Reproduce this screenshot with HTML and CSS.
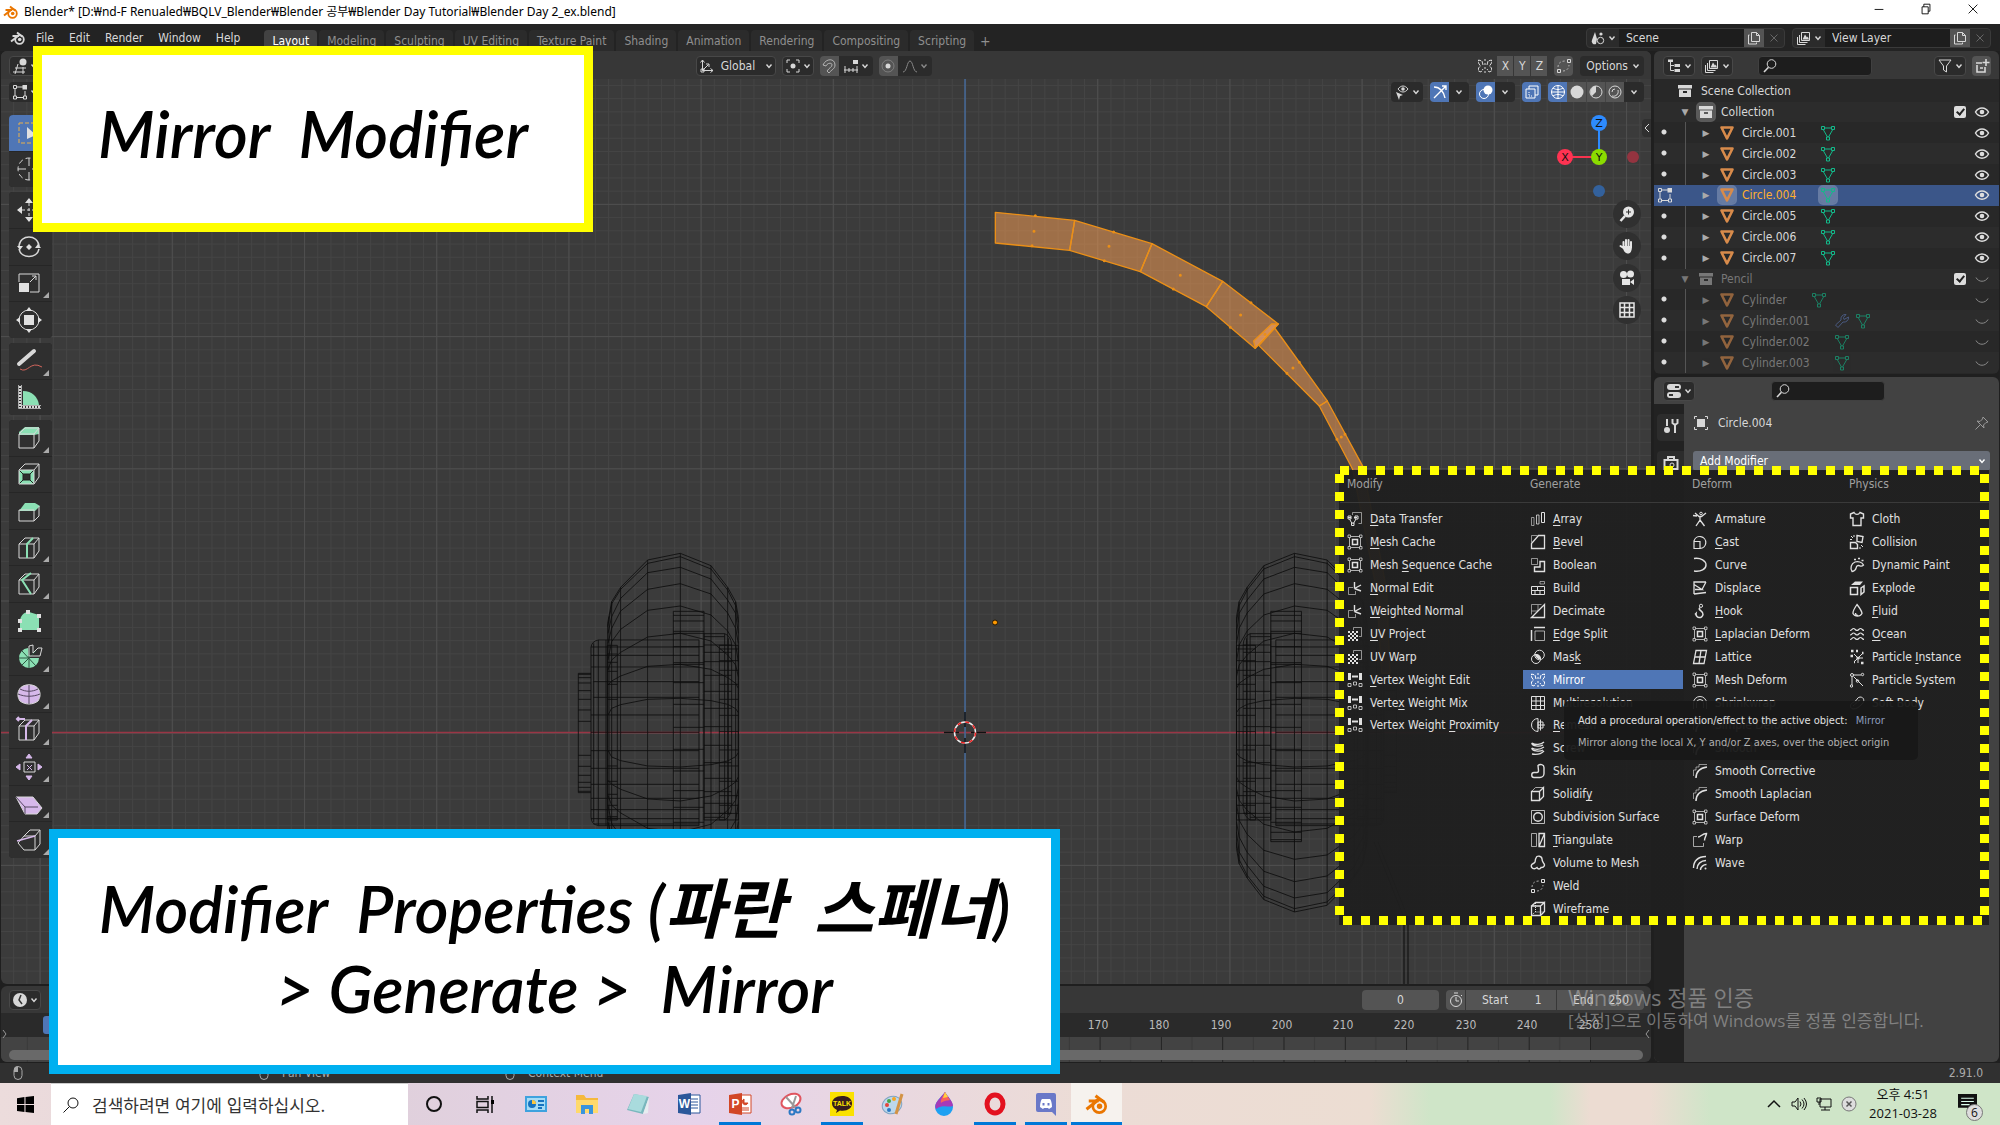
FILE: index.html
```html
<!DOCTYPE html>
<html lang="ko">
<head>
<meta charset="utf-8">
<title>Blender Day 2 - Mirror Modifier</title>
<link rel="stylesheet" href="styles.css">
</head>
<body>
<svg class="sprite" aria-hidden="true">
  <symbol id="blender" viewBox="0 0 16 16"><path d="M1 11.5 8 6H2.500M4.500 6H9M7 2.500l5.500 4.200" stroke-width="2"/><circle cx="9.500" cy="9.500" r="4.300" stroke-width="1.800"/><circle class="pupil" cx="9.700" cy="9.500" r="1.800" stroke="none"/></symbol>
  <symbol id="down" viewBox="0 0 8 8"><path d="M1.500 2.500 4 5.500l2.500-3" stroke-width="1.400"/></symbol>
  <symbol id="search" viewBox="0 0 16 16"><circle cx="9.500" cy="6" r="4.300"/><path d="M6.500 9.200 2 14" stroke-width="1.600"/></symbol>
  <symbol id="copy" viewBox="0 0 16 16"><path d="M5.500 2.500h5l3 3v6h-8zM10.500 2.500v3h3M3.500 5H2.500v9h8v-1.500"/></symbol>
  <symbol id="close" viewBox="0 0 16 16"><path d="m4.500 4.500 7 7m0-7-7 7"/></symbol>
  <symbol id="scene" viewBox="0 0 16 16"><path d="M5 2 2 10a3 3 0 0 0 4 4l1-5z" class="solid"/><circle cx="10.500" cy="10.500" r="3.200"/><circle cx="11" cy="4" r="1.600" class="solid"/></symbol>
  <symbol id="layer" viewBox="0 0 16 16"><path d="M5.500 2.500h8v8h-8zM3.500 5v7.500h8M1.500 7v7.500h8"/><path class="solid" d="m6.500 9.500 2.500-5 2 3 .8-1 1.200 3z"/></symbol>
  <symbol id="tree" viewBox="0 0 16 16"><path d="M4.500 4v8.500H8M4.500 7.500H8" /><path class="solid" d="M2 1.500h5v2.500H2zM8.500 6h5.500v3H8.500zM8.500 11h5.500v3H8.500z"/></symbol>
  <symbol id="funnel" viewBox="0 0 16 16"><path d="M2 2h12L9.500 8v6l-3-2V8z"/></symbol>
  <symbol id="box" viewBox="0 0 16 16"><path class="solid" fill-rule="evenodd" d="M1 2h14v3.500H1zM2 6.500h12V14H2zm4 1.500v2h4V8z"/></symbol>
  <symbol id="newbox" viewBox="0 0 16 16"><path d="M2 5h6M3 7v7h8V9M6 10h3M12 1v7M8.500 4.500h7" stroke-width="1.600"/></symbol>
  <symbol id="eye" viewBox="0 0 16 16"><path d="M1.500 8c3-5.500 10-5.500 13 0-3 5.500-10 5.500-13 0z" stroke-width="1.500"/><circle cx="8" cy="8" r="2.300" class="solid"/></symbol>
  <symbol id="shut" viewBox="0 0 16 16"><path d="M2 6.500c2.500 5 9.500 5 12 0"/></symbol>
  <symbol id="tri" viewBox="0 0 16 16"><path d="M2.500 2.500h11L8 13.500z" stroke-width="2.600" stroke-linejoin="round"/></symbol>
  <symbol id="mesh" viewBox="0 0 16 16"><path d="M4 3h8M3.200 4.500 7.500 12M12.800 4.500 8.500 12M1.500 1.500h3v3h-3zM11.500 1.500h3v3h-3zM6.500 12h3v3h-3z"/></symbol>
  <symbol id="edit" viewBox="0 0 16 16"><path d="M4 3h7M3 5v7M5 13.500h6M13 7v5M1.500 1.500h3v3h-3zM1.500 12h3v3h-3zM11.500 12h3v3h-3z"/><path class="solid" d="M10.500 1H15v4.500h-4.500z"/></symbol>
  <symbol id="wrench" viewBox="0 0 16 16"><path d="M10 6.500 14.500 4A4.500 4.500 0 0 1 9 9l-5 5.500L1.500 12 7 7a4.500 4.500 0 0 1 5-5.500L9.500 4.500z"/></symbol>
  <symbol id="mirror" viewBox="0 0 16 16"><path d="M8 1v2m0 2v2m0 2v2m0 2v2"/><path d="M6 7 5 3 1.500 2v3l2 3-2 2v3L4 14l2-3M10 7l1-4 3.500-1v3l-2 3 2 2v3L12 14l-2-3" stroke-dasharray="4 1"/></symbol>
  <symbol id="i-data" viewBox="0 0 16 16"><path d="M5.500 4V1.500h9v11h-3" opacity=".6"/><path d="M1 6.500h3m3 0h3M2.500 8 5 12.500M9 8 6.500 12.500M1 5h3v3H1zM8 5h3v3H8zM4.500 12h2.500v2.500H4.500z"/></symbol>
  <symbol id="i-cache" viewBox="0 0 16 16"><path d="M2.500 4v8.500M13.500 4v8.500M4 2.500h8.500M4 13.500h8.500M1 1h2.500v2.500H1zM12.500 1H15v2.500h-2.500zM1 12.500h2.500V15H1zM12.500 12.500H15V15h-2.500z" opacity=".75"/><path d="M5.500 5.500h5v5h-5z" stroke-width="1.500"/></symbol>
  <symbol id="i-normal" viewBox="0 0 16 16"><path d="M6 7.500H1.500v7h7V11" opacity=".6"/><path d="M7.500 8.500V2M7.500 8.500 14 5M7.500 8.500l6.500 2.500" stroke-width="1.400"/></symbol>
  <symbol id="i-uv" viewBox="0 0 16 16"><path d="M6.500 4V1.500h8v9H12" opacity=".6"/><path stroke-width="2" stroke-dasharray="2 2" d="M1 6h10M3 8h8M1 10h10M3 12h8M1 14h10"/></symbol>
  <symbol id="i-weight" viewBox="0 0 16 16"><path stroke-width="3" d="M2.500 1v7M13.500 1v7"/><path stroke-width="2" d="M5 4.500h6"/><path d="M1 11.500h3v3H1zM6.500 10h3v3h-3zM12 11.500h3v3h-3z" opacity=".8"/></symbol>
  <symbol id="i-array" viewBox="0 0 16 16"><path d="M1.500 6.500H4v8H1.500z" opacity=".6"/><path d="M6.500 4H9v9H6.500z" opacity=".8"/><path d="M11.500 1.500H14.500v10h-3z"/></symbol>
  <symbol id="i-bevel" viewBox="0 0 16 16"><path d="M1.500 1.500h6M1.500 1.500v7" opacity=".6"/><path d="M1.500 14.500v-5l7-8h6v13z" stroke-width="1.300"/></symbol>
  <symbol id="i-bool" viewBox="0 0 16 16"><path d="M1.500 1.500h6v6h-6z" opacity=".6"/><path d="M10 4.500h4.500v10h-10V10H10z" stroke-width="1.400"/></symbol>
  <symbol id="i-build" viewBox="0 0 16 16"><path d="M1.500 6.500h6v4h-6zM1.500 10.500h13v4h-13zM5 14.500v-4M10 14.500v-4M7.500 6.500h7v4"/><path d="M10 1.500h4.500V4H10z" opacity=".6"/></symbol>
  <symbol id="i-decimate" viewBox="0 0 16 16"><path d="M1.500 1.500v10M1.500 1.500h10M1.500 8H8V2" opacity=".6"/><path d="m1.500 14.500 13-13v13z" stroke-width="1.300"/></symbol>
  <symbol id="i-split" viewBox="0 0 16 16"><path d="M4 1.500h11M1.500 4v11" stroke-width="1.500"/><path d="M5 5h9.500v9.500H5z" opacity=".7"/></symbol>
  <symbol id="i-mask" viewBox="0 0 16 16"><circle cx="6" cy="10" r="4.500"/><circle cx="9.500" cy="6" r="4.800"/><path class="solid" d="M5 5a5 5 0 0 1 6 5 5 5 0 0 1-6-5z"/></symbol>
  <symbol id="i-multi" viewBox="0 0 16 16"><path d="M1.500 1.500h13v13h-13zM1.500 6h13M1.500 10.500h13M6 1.500v13M10.500 1.500v13"/></symbol>
  <symbol id="i-remesh" viewBox="0 0 16 16"><path d="M8 1.500a6.500 6.500 0 0 0 0 13z"/><path d="M8 5h5v6H8zM8 8h7M10.500 2.500v11"/></symbol>
  <symbol id="i-screw" viewBox="0 0 16 16"><path d="M2 3c3 2 9 2 12-1M2 3c-1 3 8 4 11 2M2 8c4 2 9 1 12-1M2 8c-1 3 8 4 11 2M2 14c5 1 9 0 12-3" stroke-width="1.300"/></symbol>
  <symbol id="i-skin" viewBox="0 0 16 16"><path d="M8 2.500c2-2 6-1 6 2v6a4 4 0 0 1-4 4H4c-3 0-3-5 0-5h3c1 0 1.500-.5 1.500-2z" stroke-width="1.400"/></symbol>
  <symbol id="i-solid" viewBox="0 0 16 16"><path d="M1.500 5.500h8v9h-8zM9.500 5.500l4-4v9l-4 4" stroke-width="1.300"/><path d="m1.500 5.500 4-4h8" opacity=".7"/></symbol>
  <symbol id="i-subd" viewBox="0 0 16 16"><path d="M1.500 1.500h13v13h-13z" opacity=".8"/><circle cx="8" cy="8" r="4.300" stroke-width="1.400"/></symbol>
  <symbol id="i-triang" viewBox="0 0 16 16"><path d="M1.500 1.500h5v13h-5z" opacity=".7"/><path d="M9 1.500h5.500v13H9zM9 14.500l5.500-13" stroke-width="1.300"/></symbol>
  <symbol id="i-volume" viewBox="0 0 16 16"><path d="M6 3c1-3 6-2 6 1 0 2 0 2 1.500 4 2 2 .5 5-2.500 4.500-1 2-3 2-4 0C4 15 .5 13 1.500 10c.500-1.500 3-1.500 3.500-3 .500-1.500 0-2 1-4z" stroke-width="1.400"/></symbol>
  <symbol id="i-weld" viewBox="0 0 16 16"><path d="M11.500 1.500h3v3h-3zM1.500 11.500h3v3h-3z"/><path d="M2 9c0-4 3-6 7-6M7 13c4 0 6-3 6-6" stroke-dasharray="2 2" opacity=".7"/></symbol>
  <symbol id="i-wire" viewBox="0 0 16 16"><path d="M1.500 5h9v9.500h-9zM10.500 5l4-3.500v9l-4 4M1.500 5l4-3.500h9" stroke-width="1.300"/><path d="M5.500 2v9h8M5.500 11l-4 3" stroke-dasharray="1 1"/></symbol>
  <symbol id="i-arm" viewBox="0 0 16 16"><path d="m3 2 4 3.500h2.500L14 2M8 5.500V9l-4 6M8 9l4.500 6M1 4.500l4 .5" stroke-width="1.300"/><circle cx="9" cy="2.500" r="1.300"/></symbol>
  <symbol id="i-cast" viewBox="0 0 16 16"><path d="M2 7a6 6 0 1 1 6 7.500H2zM2 7.500h6v7" stroke-width="1.200"/></symbol>
  <symbol id="i-curve" viewBox="0 0 16 16"><path d="M2 1.500C9 .5 14 4 14 8s-5 7-12 6" stroke-width="1.400"/></symbol>
  <symbol id="i-disp" viewBox="0 0 16 16"><path d="M14 2H2v12M2 4.500l8 5H3M2 14l12-1.500M10 9.500 14 2" stroke-width="1.300"/></symbol>
  <symbol id="i-hook" viewBox="0 0 16 16"><path d="M8 4.500c-3 3 4 3.500 3 7a3.500 3.500 0 0 1-7-1l-1 1" stroke-width="1.600"/><circle cx="9" cy="2.800" r="1.600"/></symbol>
  <symbol id="i-lattice" viewBox="0 0 16 16"><path d="M4 1.500h10.500l-2.500 13H1.500zM9 1.500l-2 13M3 8h10.500" stroke-width="1.300"/></symbol>
  <symbol id="i-shrink" viewBox="0 0 16 16"><path d="M1.500 14V8a6.500 6.500 0 0 1 13 0v6M4.500 13V8a3.500 3.500 0 0 1 7 0v5"/></symbol>
  <symbol id="i-smooth" viewBox="0 0 16 16"><path d="M4 15C4 8 8 5 15 4" stroke-width="1.500"/><path d="M1.500 13V7H4V4h3V1.500h8" opacity=".6"/></symbol>
  <symbol id="i-warp" viewBox="0 0 16 16"><path d="M5 4.500H1.500v10h10V11" opacity=".7"/><path d="M6 5c3 0 4-3.500 8.500-3.500 0 2-2 4-2 7" stroke-width="1.500"/></symbol>
  <symbol id="i-wave" viewBox="0 0 16 16"><path d="M1.500 13C1.500 6 6 1.500 14 1.500M5 14c0-5 4-8.500 9-8.500M8.500 15c0-3 3-5.500 6-5.500" stroke-width="1.400"/><circle cx="13.500" cy="13.500" r="1" class="solid"/></symbol>
  <symbol id="i-cloth" viewBox="0 0 16 16"><path d="M5 1.500c1.500 2.500 4.500 2.500 6 0l3.500 1.500v4H12v7.500H4V7H1.500V3z" stroke-width="1.400"/></symbol>
  <symbol id="i-coll" viewBox="0 0 16 16"><path d="m8 1.500 6 1-1 6-5-1zM1.500 8.500h5l2 2v4h-7z" stroke-width="1.400"/><path d="m2 2 2 2M5 1v2M1 5.500h2M12 11l2 2M11 13v2" /></symbol>
  <symbol id="i-paint" viewBox="0 0 16 16"><path d="M3 14.500c-2-3-1-8 3-9.500 3-1 7 0 8.500 3-3 3-4-1-6.500 1-1.500 1.500 0 5-5 5.500z" stroke-width="1.300"/><path d="M5 2.500h2M9 1.500h2M12.500 3.500h2" stroke-width="1.600"/></symbol>
  <symbol id="i-explode" viewBox="0 0 16 16"><path class="solid" d="m2 5 4-3.500h8L11 5z"/><path d="M1.500 7.500h7v7h-7zM12 8l3-2v6l-3 2.500z" stroke-width="1.500"/></symbol>
  <symbol id="i-fluid" viewBox="0 0 16 16"><path d="M8 1.500c5 6.500 5 8 5 9a5 4.500 0 0 1-9 0c0-1-.5-2.500 4-9zM6.500 10c0 1.500 1 2.500 2.500 2.500" stroke-width="1.300"/></symbol>
  <symbol id="i-ocean" viewBox="0 0 16 16"><path d="M1 4.500c2 0 2-2 3.500-2s2 2 3.500 2 2-2 3.500-2 2 2 3.500 2M1 9c2 0 2-2 3.500-2s2 2 3.500 2 2-2 3.500-2 2 2 3.500 2M1 13.500c2 0 2-2 3.500-2s2 2 3.500 2 2-2 3.500-2 2 2 3.500 2" stroke-width="1.200"/></symbol>
  <symbol id="i-pinst" viewBox="0 0 16 16"><path d="M9 9 5 5M9 9h5M9 9v5M9 9l4-4M9 9l-4 4" /><path stroke-width="2.500" d="M2 2h2.500M1.500 7H4M7.500 9h3M12 14h2.500M7 2h2M5 13h1M13 4h1.500"/></symbol>
  <symbol id="i-psys" viewBox="0 0 16 16"><path d="M4.500 4.500 14 14M4 3h8M3 5v8"/><circle cx="3" cy="3" r="1.500"/><circle cx="13.500" cy="2.500" r="1.200"/><circle cx="2.500" cy="14" r="1.200"/><circle cx="8.500" cy="9" r="1.300"/></symbol>
  <symbol id="i-soft" viewBox="0 0 16 16"><path d="M4 14C0 13 1 8 5 7c3-1 3-5 6-5 4 0 5 4 2 7s-5 5-9 5z"/><path d="m4 11 7-6" stroke-dasharray="2 1"/></symbol>
  <symbol id="mouse" viewBox="0 0 12 16"><rect x="2" y="1.500" width="8" height="13" rx="4"/><path class="solid" d="M2 7V4.500a3 3 0 0 1 4-3V7z"/></symbol>
  <symbol id="cube" viewBox="0 0 28 28"><path d="M4 10h15v14H4zM4 10l6-6h14l-5 6M24 4v13l-5 7" /></symbol>
</svg>

<header class="titlebar">
  <svg class="ic orange"><use href="#blender"/></svg>
  <h1>Blender* [D:₩nd-F Renualed₩BQLV_Blender₩Blender 공부₩Blender Day Tutorial₩Blender Day 2_ex.blend]</h1>
  <div class="winbtns">
    <button aria-label="Minimize"><svg viewBox="0 0 16 16"><path d="M3 8.500h10"/></svg></button>
    <button aria-label="Restore"><svg viewBox="0 0 16 16"><path d="M3.500 5.500h7v8h-7zM5.500 5.500v-3h7v8h-2"/></svg></button>
    <button aria-label="Close"><svg viewBox="0 0 16 16"><path d="m3 3 10 10m0-10L3 13"/></svg></button>
  </div>
</header>

<nav class="topbar">
  <svg class="ic logo"><use href="#blender"/></svg>
  <div class="menus"><button>File</button><button>Edit</button><button>Render</button><button>Window</button><button>Help</button></div>
  <div class="tabs">
    <button class="on">Layout</button><button>Modeling</button><button>Sculpting</button><button>UV Editing</button><button>Texture Paint</button><button>Shading</button><button>Animation</button><button>Rendering</button><button>Compositing</button><button>Scripting</button><button class="plus">+</button>
  </div>
  <div class="idblock">
    <button class="pick" aria-label="Browse scene"><svg class="ic"><use href="#scene"/></svg><svg class="dn"><use href="#down"/></svg></button>
    <input value="Scene" aria-label="Scene name">
    <button class="lit" aria-label="New scene"><svg class="ic"><use href="#copy"/></svg></button>
    <button class="dim" aria-label="Delete scene"><svg class="ic"><use href="#close"/></svg></button>
  </div>
  <div class="idblock">
    <button class="pick" aria-label="Browse view layer"><svg class="ic"><use href="#layer"/></svg><svg class="dn"><use href="#down"/></svg></button>
    <input value="View Layer" aria-label="View layer name">
    <button class="lit" aria-label="New view layer"><svg class="ic"><use href="#copy"/></svg></button>
    <button class="dim" aria-label="Delete view layer"><svg class="ic"><use href="#close"/></svg></button>
  </div>
</nav>

<main class="workspace">
  <div class="leftcol">
    <section class="viewport">
      <svg class="canvas">
        <defs>
          <pattern id="minor" patternUnits="userSpaceOnUse" x="965" y="732.700" width="13.220" height="13.220"><path d="M0 .5h13.300M.5 0v13.300" stroke="#444"/></pattern>
          <pattern id="major" patternUnits="userSpaceOnUse" x="965" y="732.700" width="132.200" height="132.200"><path d="M0 .5h132.200M.5 0v132.200" stroke="#4e4e4e"/></pattern>
          <g id="rings">
            <path d="M143 608V280l12-65 27-43 81-82 98-20 92 37 50 65 24 43 8 45v348"/>
            <path d="M143 290l13-70 26-42 81-78 98-20 92 37 50 63 24 47 8 50"/>
            <path d="M144 310l11-50 27-55 81-77 98-16 92 35 50 63 24 40 8 60"/>
            <path d="M144 340l11-45 27-52 81-65 98-17 92 31 50 57 24 46 8 45"/>
            <path d="M144 390l11-55 27-37 81-57 98-13 92 27 50 48 24 42 8 50"/>
            <path d="M144 420l11-30 27-23 81-46 98-11 92 23 50 42 24 30 8 35"/>
            <path d="M144 465l11-12 27-15 81-29 98-6 92 15 50 25 24 17 8 15"/>
            <path d="M144 555l11-20 27-11 81-16 98-3 92 7 50 11 24 13 8 12"/>
            <path d="M182 172v436M263 90v518M361 70v538M453 107v501M503 172v436M527 215v393M155 215v393M147 260v348"/>
          </g>
          <g id="wheel">
            <use href="#rings"/><use href="#rings" transform="matrix(1 0 0 -1 0 1216)"/>
            <path d="M340 244h92v691h-92zM340 256h92M340 273h92M340 304h92M340 310h92M340 350h92M340 398h92M340 403h92M340 458h92M340 523h92M340 592h92M340 658h92M340 723h92M340 782h92M340 832h92M340 877h92M340 907h92M340 929h92"/>
            <path d="M115 330h302v557H115q-22-4-22-26V352q2-18 22-22zM101 340v536M115 330v557M138 330v557M93 351h324M93 376h324M93 411h324M100 455h317M100 502h317M93 555h324M93 607h324M93 662h324M93 715h324M93 763h324M93 805h324M93 839h324M93 866h324M100 882h317"/>
            <path d="M93 430H55v358h38M55 433h38M55 443h38M55 459h38M55 482h38M55 508h38M55 540h38M55 574h38M55 676h38M55 709h38M55 736h38M55 757h38M55 772h38M55 784h38"/>
            <path d="M432 311h62q20 8 21 34v490q-4 26-21 35h-62zM494 311v559M505 325v530M432 320h62M432 345h83M432 367h83M432 395h83M432 436h83M432 484h83M432 535h83M432 590h83M432 646h83M432 698h83M432 745h83M432 785h83M432 820h83M432 850h83M432 862h62"/>
            <path d="M478 346h57v524h-57zM478 357h57M478 392h57M478 421h57M478 463h57M478 508h57M478 556h57M478 605h57M478 660h57M478 708h57M478 754h57M478 797h57M478 826h57M478 850h57"/>
            <path d="M142 346h30v524h-30zM142 372h30M142 397h30M142 424h30M142 463h30M142 508h30M142 708h30M142 754h30M142 793h30M142 826h30M142 860h30M142 865h30"/>
          </g>
        </defs>
        <g transform="translate(-1 -51)">
          <rect width="3000" height="2000" fill="url(#minor)"/>
          <rect width="3000" height="2000" fill="url(#major)"/>
          <path d="M0 732.500h3000" stroke="#9a3545" stroke-width="1.500"/>
          <path d="M965 51v1500" stroke="#456898" stroke-width="1.500"/>
          <g stroke="#0d0d0d" stroke-width="2.800" fill="none" stroke-opacity=".9">
            <use href="#wheel" transform="translate(560 530) scale(.3333)"/>
            <use href="#wheel" transform="translate(1414.800 530) scale(-.3333 .3333)"/>
          </g>
          <path d="M1374 842l30 76v66M1378 842l30 76v66" stroke="#0d0d0d" fill="none"/>
          <g transform="translate(960 190) scale(.3333)" fill="#f09b53" fill-opacity=".55" stroke="#ea8f17" stroke-width="4" stroke-linejoin="round">
            <path d="M106 67 344 91 329 181 106 159z"/><path d="M344 91 576 161 541 245 329 181z"/><path d="M576 161 788 274 739 350 541 245z"/><path d="M788 274 955 402 885 475 739 350z"/><path d="M944 414 1102 633 1078 648 897 467z"/><path d="M1102 633 1209 830 1280 1200 1290 1450 1265 1450 1250 1200 1178 838 1078 648z"/>
            <path d="M935 402h20L886 475l-5-22z" fill="#ffa866"/>
            <path stroke-width="9" stroke-linecap="round" d="M222 124h0M447 169h0M661 256h0M842 375h0M915 433h0M999 534h0M1144 741h0M226 77h0M216 167h0M461 126h0M433 212h0M640 297h0M873 338h0M811 412h0M1018 517h0M981 550h0M1155 733h0M1131 748h0"/>
          </g>
          <circle cx="995" cy="622.500" r="2.500" fill="#f90" stroke="#2a1a00"/>
          <path d="M944 732.500h15M971 732.500h15M965 712v15M965 738v15" stroke="#111" stroke-width="1.500"/>
          <circle cx="965" cy="732.500" r="10.500" fill="none" stroke="#eee" stroke-width="1.500"/>
          <circle cx="965" cy="732.500" r="10.500" fill="none" stroke="#e22" stroke-width="1.500" stroke-dasharray="4.120 4.120"/>
        </g>
      </svg>
      <div class="vheader">
        <div class="vleft"><button class="w" aria-label="Editor type"><svg class="ic"><path d="M3 10h11M1 14h12M6 6 3 16M11 9v7"/><circle class="solid" cx="11" cy="4" r="3.500"/></svg><svg class="dn"><use href="#down"/></svg></button></div>
        <button class="w"><svg class="ic"><path d="M3.500 2v10.500H14M3.500 12.500l6-6M1.500 4.500l2-2.500 2 2.500M11.500 10.500l2.500 2-2.500 2M7 6h3v3M2 11h3v3H2z"/></svg><span class="global">Global</span><svg class="dn"><use href="#down"/></svg></button>
        <button class="w" aria-label="Pivot"><svg class="ic"><path d="M5 2H2v3M11 2h3v3M5 14H2v-3M11 14h3v-3"/><circle class="solid" cx="8" cy="8" r="2.500"/></svg><svg class="dn"><use href="#down"/></svg></button>
        <div class="join"><button class="lit" aria-label="Snap"><svg class="ic"><path d="M2 7c3-7 12-7 12 0 0 4-4 5-6 8l-2-2c2-3 5-4 5-6 0-3-5-2-6 1z" opacity=".7"/></svg></button><button class="w" aria-label="Snap to"><svg class="ic"><path d="M1 12h14M2 8v7M6 10v4M10 10v4M14 8v7"/><path class="solid" d="M10 2h5v4h-5z"/></svg><svg class="dn"><use href="#down"/></svg></button></div>
        <div class="join"><button class="lit" aria-label="Proportional editing"><svg class="ic"><circle cx="8" cy="8" r="6" opacity=".3"/><circle class="solid" cx="8" cy="8" r="2.500"/></svg></button><button class="w faint" aria-label="Falloff"><svg class="ic"><path d="M1 14c4 0 4-11 7-11s3 11 7 11"/></svg><svg class="dn"><use href="#down"/></svg></button></div>
        <div class="vright">
          <svg class="ic"><use href="#mirror"/></svg>
          <div class="xyz"><button class="lit">X</button><button class="lit">Y</button><button class="lit">Z</button></div>
          <button class="lit" aria-label="Auto merge"><svg class="ic"><use href="#i-weld"/></svg></button>
          <button class="w options">Options<svg class="dn"><use href="#down"/></svg></button>
        </div>
      </div>
      <div class="vsub">
        <button class="w" aria-label="Edit mode"><svg class="ic"><use href="#edit"/></svg><svg class="dn"><use href="#down"/></svg></button>
        <div class="shading">
          <button class="w" aria-label="Visibility"><svg class="ic"><path class="solid" d="m2 8 7 3-3 1-1 4z"/><path d="M4 5c3-4 7-4 10 0-3 4-7 4-10 0z"/><circle class="solid" cx="9" cy="5" r="1.800"/></svg><svg class="dn"><use href="#down"/></svg></button>
          <div class="join"><button class="blue" aria-label="Gizmos"><svg class="ic"><path d="M2 3c6 0 10 5 11 11M2 14 14 2M10 2h4v4" stroke-width="1.400"/></svg></button><button class="w" aria-label="Gizmo settings"><svg class="dn"><use href="#down"/></svg></button></div>
          <div class="join"><button class="blue" aria-label="Overlays"><svg class="ic"><circle class="solid" cx="10" cy="6" r="4.500"/><circle cx="6" cy="10" r="4.500"/></svg></button><button class="w" aria-label="Overlay settings"><svg class="dn"><use href="#down"/></svg></button></div>
          <button class="blue" aria-label="X-ray"><svg class="ic"><path d="M2 5h9v9H2zM5 5V2h9v9h-3"/><path d="M5 8v4h4" stroke-dasharray="1 1"/></svg></button>
          <div class="join"><button class="blue" aria-label="Wireframe"><svg class="ic"><circle cx="8" cy="8" r="6.500"/><path d="M8 1v14M1 8h14M3 4c3 2 7 2 10 0M3 12c3-2 7-2 10 0"/></svg></button><button class="lit" aria-label="Solid"><svg class="ic"><circle class="solid" cx="8" cy="8" r="6.500"/></svg></button><button class="lit" aria-label="Material"><svg class="ic"><circle cx="8" cy="8" r="6"/><path class="solid" d="M8 8V2a6 6 0 0 0-4 10z"/></svg></button><button class="lit" aria-label="Rendered"><svg class="ic"><circle cx="8" cy="8" r="6"/><path d="M5 8a3 3 0 0 1 3-3M5 12c4 1 7-2 6-6"/></svg></button><button class="w" aria-label="Shading settings"><svg class="dn"><use href="#down"/></svg></button></div>
        </div>
      </div>
      <div class="toolbar">
        <div class="tgroup g2">
          <button class="blue" aria-label="Select box"><svg><path d="M4 4h20v20H4z" stroke="#e8b04c" stroke-dasharray="4 2"/><path class="solid" d="m12 8 9 8-9 4z"/></svg></button>
          <button aria-label="Cursor"><svg><circle cx="14" cy="14" r="11" stroke-dasharray="5 3"/><path d="M14 3v8M14 17v8M3 14h8M17 14h8"/></svg></button>
        </div>
        <div class="tgroup g4">
          <button aria-label="Move"><svg><path class="solid" d="m14 2 4 5h-8zM14 26l4-5h-8zM2 14l5-4v8zM26 14l-5-4v8z"/><path d="M14 7v14M7 14h14" stroke-dasharray="3 2"/></svg></button>
          <button aria-label="Rotate"><svg><path d="M4 13c1-12 19-12 20 0M24 16c-2 10-18 10-20 0" stroke-width="1.500"/><path class="solid" d="m14 11 3 3-3 3-3-3zM2 13h6l-3 4zM20 15h6l-3-4z"/></svg></button>
          <button class="more" aria-label="Scale"><svg><path d="M4 13V5h20v18h-9M15 13l6-6M17 7h4v4"/><path class="solid" d="M4 14h10v9H4z"/></svg></button>
          <button aria-label="Transform"><svg><circle cx="14" cy="14" r="10"/><path class="solid" d="M9 9h10v10H9zM14 1l3 4h-6zM14 27l3-4h-6zM1 14l4-3v6zM27 14l-4-3v6z"/></svg></button>
        </div>
        <div class="tgroup g2">
          <button class="more" aria-label="Annotate"><svg><path d="M4 17 19 4" stroke-width="4" stroke-linecap="round"/><path d="M5 22c8 5 10-9 22-2" stroke="#d0655c"/></svg></button>
          <button aria-label="Measure"><svg><path class="mint" d="M8 8c9 0 15 6 16 14H8z"/><path d="M5 2v22h21" stroke-width="3.500"/><path d="M5 2v22h21" stroke="#333" stroke-dasharray="1 2" stroke-width="2"/></svg></button>
        </div>
        <div class="tgroup g12">
          <button class="more" aria-label="Extrude"><svg><path class="mint" d="M4 11V8l6-5h14v7l-5 1z"/><use href="#cube"/></svg></button>
          <button aria-label="Inset"><svg><path class="mint" fill-rule="evenodd" d="M4 10h15v14H4zm4 4v6h7v-6z"/><path d="m4 10 4 4h7l4-4M4 24l4-4h7l4 4M8 14v6M15 14v6" stroke="#222"/><use href="#cube"/></svg></button>
          <button aria-label="Bevel"><svg><path class="mint" d="M4 14 10 6h10l5 3-5 5z"/><path d="M4 13h15v11H4zM24 9v10l-5 5"/></svg></button>
          <button class="more" aria-label="Loop cut"><svg><use href="#cube"/><path d="M12 24V10l6-6" stroke="#8be0b4" stroke-width="2"/></svg></button>
          <button class="more" aria-label="Knife"><svg><use href="#cube"/><path d="m16 3-9 7 9 14" stroke="#8be0b4" stroke-width="2"/></svg></button>
          <button aria-label="Poly build"><svg><path class="mint" d="M5 14c0-4 3-9 9-9l10 3v15H5z"/><path class="solid" d="M3 12h4v4H3zM11 3h4v4h-4zM22 7h4v4h-4zM3 21h4v4H3zM22 21h4v4h-4z"/></svg></button>
          <button class="more" aria-label="Spin"><svg><path class="mint" d="M13 5a10 10 0 1 0 11 10H14z"/><path d="M14 5v20M4 15h10M7 8l14 15M21 8 7 22" stroke="#2d5541"/><path d="M14 13V3l4-1v8l5-5h4l-2 8z"/></svg></button>
          <button class="more" aria-label="Smooth"><svg><path class="lilac" d="M4 10c3-7 17-7 20 0 2 4 1 8-1 11-5 4-13 4-18 0-2-3-3-7-1-11z"/><path d="M3 14c7 3 15 3 22 0M14 5v19M5 9c6 3 12 3 18 0" stroke="#554860"/></svg></button>
          <button class="more" aria-label="Edge slide"><svg><use href="#cube"/><path d="M11 24V10l6-6M2 3h8M4 1 2 3l2 2" stroke="#d6b8ea" stroke-width="2"/></svg></button>
          <button class="more" aria-label="Shrink"><svg><path d="M9 9h11v10H9z"/><path d="m14 1 3 4h-6zM14 27l3-4h-6zM1 14l4-3v6zM27 14l-4-3v6zM12 12l5 5m0-5-5 5" class="lilac" stroke="#d6b8ea"/></svg></button>
          <button class="more" aria-label="Shear"><svg><path class="lilac" d="M1 7h17l9 11-5 6-12 0z"/><path d="m1 7 9 10h13M10 17v7" stroke="#554860"/></svg></button>
          <button class="more" aria-label="Rip"><svg><path d="M9 10 15 4h10v14l-5 6H9l-6-7z"/><path d="m9 10h11v14M20 10l5-6"/><path d="m2 15 18-5" stroke="#d6b8ea" stroke-width="1.500"/></svg></button>
        </div>
      </div>
      <div class="navside">
        <svg class="gizmo" viewBox="0 0 92 92">
          <path d="M46 14v32" stroke="#2d8bff" stroke-width="2"/><path d="M12 46h34" stroke="#f8334e" stroke-width="2"/>
          <circle cx="46" cy="12" r="8" fill="#2d8bff"/><circle cx="12" cy="46" r="8" fill="#ff3352"/><circle cx="46" cy="46" r="8" fill="#8bdc00"/><circle cx="80" cy="46" r="6" fill="#943440"/><circle cx="46" cy="80" r="6" fill="#33619c"/>
          <text x="46" y="16">Z</text><text x="12" y="50">X</text><text x="46" y="50">Y</text>
        </svg>
        <button aria-label="Zoom"><svg class="ic"><circle class="solid" cx="9.500" cy="6" r="5.500"/><path d="M6 10 1.500 15" stroke-width="2.500"/><path d="M9.500 3.500v5M7 6h5" stroke="#333"/></svg></button>
        <button aria-label="Pan"><svg class="ic"><path stroke-width="2" stroke-linecap="round" d="M4.500 9V4M7 8V2M9.500 8V2M12 9V4M4.500 10 1.500 8"/><path class="solid" d="M3.500 8H13c0 5-1.500 7.500-4 7.500S4 13 3.500 8z"/></svg></button>
        <button aria-label="Camera"><svg class="ic"><circle class="solid" cx="4.500" cy="4.500" r="3.500"/><circle class="solid" cx="11.500" cy="4" r="3.500"/><path class="solid" d="M3 9h8v6H3zM11 12l4-3v6z"/></svg></button>
        <button aria-label="Orthographic"><svg class="ic"><path d="M1 1h14v14H1zM1 5.500h14M1 10.500h14M5.500 1v14M10.500 1v14" stroke-width="1.500"/></svg></button>
      </div>
      <button class="fold" aria-label="Open sidebar"><svg class="dn"><path d="M6 0 2 4l4 4"/></svg></button>
    </section>

    <section class="timeline">
      <div class="thead">
        <button class="w" aria-label="Timeline editor"><svg class="ic"><circle class="solid" cx="8" cy="8" r="7"/><path d="m9 3-2 5 3 4" stroke="#333" stroke-width="1.500"/></svg><svg class="dn"><use href="#down"/></svg></button>
        <div class="frames">
          <input class="cur" value="0" aria-label="Current frame">
          <div class="join"><button class="lit" aria-label="Preview range"><svg class="ic"><circle cx="8" cy="9" r="5.500"/><path d="M8 9V5M8 9h3M6 1h4M13 3l1 1"/></svg></button>
          <label>Start<input value="1"></label><label>End<input class="end" value="250"></label></div>
        </div>
      </div>
      <svg class="ruler">
        <defs><pattern id="ticks" patternUnits="userSpaceOnUse" x="56.500" y="0" width="61.300" height="60"><path d="M.5 0v60" stroke="#222"/><path d="M31 0v60" stroke="#383838"/></pattern></defs>
        <rect width="100%" height="24" fill="#2a2a2a"/>
        <rect y="24" width="1590" height="40" fill="#434343"/><rect y="24" width="1590" height="40" fill="url(#ticks)"/>
        <rect x="42" y="3" width="24" height="18" rx="3" fill="#4f76b6"/>
        <g><text x="1097" y="16">170</text><text x="1158" y="16">180</text><text x="1220" y="16">190</text><text x="1281" y="16">200</text><text x="1342" y="16">210</text><text x="1403" y="16">220</text><text x="1465" y="16">230</text><text x="1526" y="16">240</text><text x="1588" y="16">250</text></g>
        <path d="m2 17 3 4-3 4M1648 17l-3 4 3 4" fill="none" stroke="#999"/>
      </svg>
      <div class="scroll"></div>
    </section>
  </div>

  <div class="rightcol">
    <section class="outliner">
      <div class="ohead">
        <button class="w" aria-label="Editor type"><svg class="ic"><use href="#tree"/></svg><svg class="dn"><use href="#down"/></svg></button>
        <button class="w" aria-label="Display mode"><svg class="ic"><use href="#layer"/></svg><svg class="dn"><use href="#down"/></svg></button>
        <label class="find"><svg class="ic"><use href="#search"/></svg><input aria-label="Filter objects"></label>
        <button class="w right" aria-label="Filter"><svg class="ic"><use href="#funnel"/></svg><svg class="dn"><use href="#down"/></svg></button>
        <button class="lit" aria-label="New collection"><svg class="ic"><use href="#newbox"/></svg></button>
      </div>
      <ul class="tree">
        <li class="l0"><svg class="ic"><use href="#box"/></svg>Scene Collection</li>
        <li class="l1"><i>▼</i><svg class="ic active"><use href="#box"/></svg>Collection<span class="end"><input type="checkbox" checked aria-label="Enable Collection"><svg class="ic"><use href="#eye"/></svg></span></li>
        <li><b></b><i>▶</i><svg class="ic tri"><use href="#tri"/></svg>Circle.001<svg class="ic mesh"><use href="#mesh"/></svg><span class="end"><svg class="ic"><use href="#eye"/></svg></span></li>
        <li><b></b><i>▶</i><svg class="ic tri"><use href="#tri"/></svg>Circle.002<svg class="ic mesh"><use href="#mesh"/></svg><span class="end"><svg class="ic"><use href="#eye"/></svg></span></li>
        <li><b></b><i>▶</i><svg class="ic tri"><use href="#tri"/></svg>Circle.003<svg class="ic mesh"><use href="#mesh"/></svg><span class="end"><svg class="ic"><use href="#eye"/></svg></span></li>
        <li class="sel"><svg class="ic mode"><use href="#edit"/></svg><i>▶</i><svg class="ic tri active"><use href="#tri"/></svg><em>Circle.004</em><svg class="ic mesh active"><use href="#mesh"/></svg><span class="end"><svg class="ic"><use href="#eye"/></svg></span></li>
        <li><b></b><i>▶</i><svg class="ic tri"><use href="#tri"/></svg>Circle.005<svg class="ic mesh"><use href="#mesh"/></svg><span class="end"><svg class="ic"><use href="#eye"/></svg></span></li>
        <li><b></b><i>▶</i><svg class="ic tri"><use href="#tri"/></svg>Circle.006<svg class="ic mesh"><use href="#mesh"/></svg><span class="end"><svg class="ic"><use href="#eye"/></svg></span></li>
        <li><b></b><i>▶</i><svg class="ic tri"><use href="#tri"/></svg>Circle.007<svg class="ic mesh"><use href="#mesh"/></svg><span class="end"><svg class="ic"><use href="#eye"/></svg></span></li>
        <li class="l1 off"><i>▼</i><svg class="ic"><use href="#box"/></svg>Pencil<span class="end"><input type="checkbox" checked aria-label="Enable Pencil"><svg class="ic"><use href="#shut"/></svg></span></li>
        <li class="off"><b></b><i>▶</i><svg class="ic tri"><use href="#tri"/></svg>Cylinder<svg class="ic mesh"><use href="#mesh"/></svg><span class="end"><svg class="ic"><use href="#shut"/></svg></span></li>
        <li class="off"><b></b><i>▶</i><svg class="ic tri"><use href="#tri"/></svg>Cylinder.001<svg class="ic wr"><use href="#wrench"/></svg><svg class="ic mesh near"><use href="#mesh"/></svg><span class="end"><svg class="ic"><use href="#shut"/></svg></span></li>
        <li class="off"><b></b><i>▶</i><svg class="ic tri"><use href="#tri"/></svg>Cylinder.002<svg class="ic mesh"><use href="#mesh"/></svg><span class="end"><svg class="ic"><use href="#shut"/></svg></span></li>
        <li class="off"><b></b><i>▶</i><svg class="ic tri"><use href="#tri"/></svg>Cylinder.003<svg class="ic mesh"><use href="#mesh"/></svg><span class="end"><svg class="ic"><use href="#shut"/></svg></span></li>
      </ul>
    </section>
    <section class="props">
      <div class="phead">
        <button class="w" aria-label="Editor type"><svg class="ic"><rect class="solid" x="1" y="1" width="14" height="6" rx="3"/><rect class="solid" x="1" y="9" width="14" height="6" rx="3"/><path d="M9 4h4M3 12h4" stroke="#333" stroke-width="2"/></svg><svg class="dn"><use href="#down"/></svg></button>
        <label class="find"><svg class="ic"><use href="#search"/></svg><input aria-label="Search properties"></label>
      </div>
      <div class="pbody">
        <div class="ptabs">
          <button aria-label="Tool"><svg class="ic"><path d="M4 1v7M12 7v8" stroke-width="2"/><circle class="solid" cx="4" cy="12" r="3"/><path d="M9.500 1v4l2.500 2 2.500-2V1" stroke-width="2"/></svg></button>
          <button aria-label="Render"><svg class="ic"><path d="M1.500 5h13v9h-13zM5 5V2h6v3" stroke-width="2"/><circle cx="9" cy="10" r="2"/></svg></button>
        </div>
        <div class="ppane">
          <div class="crumb"><svg class="ic"><path d="M4 1.500H1.500V4M12 1.500h2.500V4M4 14.500H1.500V12M12 14.500h2.500V12"/><path class="solid" d="M4 4h8v8H4z"/></svg>Circle.004<svg class="ic pin"><path d="m9 2 5 5-2 .5-2.500 2.500.5 3L3 6l3 .5L8.500 4zM6 10l-4.500 4.500"/></svg></div>
          <button class="add">Add Modifier<svg class="dn"><use href="#down"/></svg></button>
        </div>
      </div>
    </section>
  </div>

  <div class="modmenu">
    <div class="cols heads"><h2>Modify</h2><h2>Generate</h2><h2>Deform</h2><h2>Physics</h2></div>
    <div class="cols lists">
      <div class="list">
        <button><svg class="ic"><use href="#i-data"/></svg><span><u>D</u>ata Transfer</span></button>
        <button><svg class="ic"><use href="#i-cache"/></svg><span><u>M</u>esh Cache</span></button>
        <button><svg class="ic"><use href="#i-cache"/></svg><span>Mesh <u>S</u>equence Cache</span></button>
        <button><svg class="ic"><use href="#i-normal"/></svg><span><u>N</u>ormal Edit</span></button>
        <button><svg class="ic"><use href="#i-normal"/></svg><span><u>W</u>eighted Normal</span></button>
        <button><svg class="ic"><use href="#i-uv"/></svg><span><u>U</u>V Project</span></button>
        <button><svg class="ic"><use href="#i-uv"/></svg><span>UV Warp</span></button>
        <button><svg class="ic"><use href="#i-weight"/></svg><span><u>V</u>ertex Weight Edit</span></button>
        <button><svg class="ic"><use href="#i-weight"/></svg><span>Verte<u>x</u> Weight Mix</span></button>
        <button><svg class="ic"><use href="#i-weight"/></svg><span>Vertex Weight <u>P</u>roximity</span></button>
      </div>
      <div class="list">
        <button><svg class="ic"><use href="#i-array"/></svg><span><u>A</u>rray</span></button>
        <button><svg class="ic"><use href="#i-bevel"/></svg><span><u>B</u>evel</span></button>
        <button><svg class="ic"><use href="#i-bool"/></svg><span>Boolean</span></button>
        <button><svg class="ic"><use href="#i-build"/></svg><span>Build</span></button>
        <button><svg class="ic"><use href="#i-decimate"/></svg><span>Decimate</span></button>
        <button><svg class="ic"><use href="#i-split"/></svg><span><u>E</u>dge Split</span></button>
        <button><svg class="ic"><use href="#i-mask"/></svg><span>Mas<u>k</u></span></button>
        <button class="hot"><svg class="ic"><use href="#mirror"/></svg><span>Mirror</span></button>
        <button><svg class="ic"><use href="#i-multi"/></svg><span>Multiresolution</span></button>
        <button><svg class="ic"><use href="#i-remesh"/></svg><span><u>R</u>emesh</span></button>
        <button><svg class="ic"><use href="#i-screw"/></svg><span>Screw</span></button>
        <button><svg class="ic"><use href="#i-skin"/></svg><span>Skin</span></button>
        <button><svg class="ic"><use href="#i-solid"/></svg><span>Solidif<u>y</u></span></button>
        <button><svg class="ic"><use href="#i-subd"/></svg><span>Subdivision Surface</span></button>
        <button><svg class="ic"><use href="#i-triang"/></svg><span><u>T</u>riangulate</span></button>
        <button><svg class="ic"><use href="#i-volume"/></svg><span>Volume to Mesh</span></button>
        <button><svg class="ic"><use href="#i-weld"/></svg><span>Weld</span></button>
        <button><svg class="ic"><use href="#i-wire"/></svg><span>Wireframe</span></button>
      </div>
      <div class="list">
        <button><svg class="ic"><use href="#i-arm"/></svg><span>Armature</span></button>
        <button><svg class="ic"><use href="#i-cast"/></svg><span><u>C</u>ast</span></button>
        <button><svg class="ic"><use href="#i-curve"/></svg><span>Curve</span></button>
        <button><svg class="ic"><use href="#i-disp"/></svg><span>Displace</span></button>
        <button><svg class="ic"><use href="#i-hook"/></svg><span><u>H</u>ook</span></button>
        <button><svg class="ic"><use href="#i-cache"/></svg><span><u>L</u>aplacian Deform</span></button>
        <button><svg class="ic"><use href="#i-lattice"/></svg><span>Lattice</span></button>
        <button><svg class="ic"><use href="#i-cache"/></svg><span>Mesh Deform</span></button>
        <button><svg class="ic"><use href="#i-shrink"/></svg><span>Shrinkwrap</span></button>
        <button><svg class="ic"><use href="#i-smooth"/></svg><span>Simple Deform</span></button>
        <button><svg class="ic"><use href="#i-smooth"/></svg><span>Smooth</span></button>
        <button><svg class="ic"><use href="#i-smooth"/></svg><span>Smooth Corrective</span></button>
        <button><svg class="ic"><use href="#i-smooth"/></svg><span>Smooth Laplacian</span></button>
        <button><svg class="ic"><use href="#i-cache"/></svg><span>Surface Deform</span></button>
        <button><svg class="ic"><use href="#i-warp"/></svg><span>Warp</span></button>
        <button><svg class="ic"><use href="#i-wave"/></svg><span>Wave</span></button>
      </div>
      <div class="list">
        <button><svg class="ic"><use href="#i-cloth"/></svg><span>Cloth</span></button>
        <button><svg class="ic"><use href="#i-coll"/></svg><span>Collision</span></button>
        <button><svg class="ic"><use href="#i-paint"/></svg><span>Dynamic Paint</span></button>
        <button><svg class="ic"><use href="#i-explode"/></svg><span>Explode</span></button>
        <button><svg class="ic"><use href="#i-fluid"/></svg><span><u>F</u>luid</span></button>
        <button><svg class="ic"><use href="#i-ocean"/></svg><span><u>O</u>cean</span></button>
        <button><svg class="ic"><use href="#i-pinst"/></svg><span>Particle <u>I</u>nstance</span></button>
        <button><svg class="ic"><use href="#i-psys"/></svg><span>Particle System</span></button>
        <button><svg class="ic"><use href="#i-soft"/></svg><span>Soft Body</span></button>
      </div>
    </div>
    <div class="tip" role="tooltip"><p>Add a procedural operation/effect to the active object: <span>Mirror</span></p><p class="sub">Mirror along the local X, Y and/or Z axes, over the object origin</p></div>
  </div>
  <div class="activate"><p>Windows 정품 인증</p><p class="small">[설정]으로 이동하여 Windows를 정품 인증합니다.</p></div>
</main>

<footer class="status">
  <svg class="mouse"><use href="#mouse"/></svg>
  <span><svg class="mouse"><use href="#mouse"/></svg>Pan View</span>
  <span><svg class="mouse"><use href="#mouse"/></svg>Context Menu</span>
  <span class="ver">2.91.0</span>
</footer>

<nav class="taskbar">
  <button class="start" aria-label="시작"><svg viewBox="0 0 16 16"><path d="m0 2 7-1v6.500H0zM8 1l8-1v7.500H8zM0 8.500h7V15l-7-1zM8 8.500h8V16l-8-1z"/></svg></button>
  <label class="tsearch"><svg viewBox="0 0 16 16"><circle cx="10" cy="6" r="5"/><path d="m6.500 9.500-6 6"/></svg><input placeholder="검색하려면 여기에 입력하십시오." aria-label="검색"></label>
  <div class="apps">
    <button aria-label="Cortana"><svg viewBox="0 0 24 24"><circle cx="12" cy="12" r="7" fill="none" stroke="#111" stroke-width="2"/></svg></button>
    <button aria-label="Task view"><svg viewBox="0 0 24 24"><path d="M4 4v3h11V4M4 9.500h11v6H4zM4 21v-3h11v3M19 4v4M19 12v9" fill="none" stroke="#111" stroke-width="1.500"/><path d="M18 8h3v4h-3z"/></svg></button>
    <button aria-label="Control panel"><svg viewBox="0 0 24 24"><path d="M1 4h22v16H1z" fill="#3ea2de"/><path d="M3 6h18v12H3z" fill="#a6dcf5"/><circle cx="8" cy="12" r="4" fill="#1673c0"/><path d="M8 12V8a4 4 0 0 1 4 4z" fill="#ffc83d"/><path d="M14 9h6M14 13h6M14 16h4" stroke="#1673c0" stroke-width="2"/></svg></button>
    <button aria-label="Explorer"><svg viewBox="0 0 24 24"><path d="M1 3h8l2 3h12v15H1z" fill="#f5b93c"/><path d="M1 8h22v13H1z" fill="#ffd96b"/><path d="M6 22v-9h12v9h-4v-5h-4v5z" fill="#3a94dc"/></svg></button>
    <button aria-label="Notepad"><svg viewBox="0 0 24 24"><path d="m8 2 15 3-6 17L1 18z" fill="#79b7bd"/><path d="m8 2 13 2-6 16L2 17z" fill="#a9dbdd"/><path d="m23 5-1 16-5 1z" fill="#e7edf0"/></svg></button>
    <button aria-label="Word"><svg viewBox="0 0 24 24"><path d="M12 3h11v18H12z" fill="#fff" stroke="#2b579a"/><path d="M13 7h8M13 10h8M13 13h8M13 16h8" stroke="#2b579a"/><path d="m1 3 13-2v22L1 21z" fill="#2b579a"/><text x="7.500" y="16">W</text></svg></button>
    <button class="run" aria-label="PowerPoint"><svg viewBox="0 0 24 24"><path d="M12 3h11v18H12z" fill="#fff" stroke="#d24726"/><path d="M16 7a3 3 0 1 0 4 4h-4zM14 16h7M14 18h7" fill="#d24726" stroke="#d24726"/><path d="m1 3 13-2v22L1 21z" fill="#d24726"/><text x="7.500" y="16">P</text></svg></button>
    <button aria-label="Snipping tool"><svg viewBox="0 0 24 24"><ellipse cx="12" cy="9" rx="10" ry="6.500" fill="#fff" stroke="#e0555f" stroke-width="2" transform="rotate(-25 12 9)"/><path d="m7 5 11 12M17 4l-4 12" stroke="#999" stroke-width="2"/><circle cx="19" cy="18" r="2.500" fill="none" stroke="#2c79c4" stroke-width="2"/><circle cx="13" cy="20" r="2.500" fill="none" stroke="#2c79c4" stroke-width="2"/></svg></button>
    <button class="run" aria-label="KakaoTalk"><svg viewBox="0 0 24 24"><path d="M0 0h24v24H0z" fill="#fae100"/><path d="M12 4c-6 0-10 3-10 7.500 0 3 2 5 5 6.500l-1 3 4-2.500c7 1 12-2 12-7S18 4 12 4z" fill="#371d1e"/><text class="talk" x="12" y="14">TALK</text></svg></button>
    <button aria-label="Paint"><svg viewBox="0 0 24 24"><ellipse cx="11" cy="13" rx="10" ry="8.500" fill="#bcd8ec" stroke="#7fa3c2" transform="rotate(-25 11 13)"/><circle cx="6" cy="13" r="2" fill="#e3463c"/><circle cx="8" cy="9" r="2" fill="#46a546"/><circle cx="13" cy="7" r="2" fill="#f5a623"/><circle cx="8" cy="18" r="2" fill="#2c79c4"/><path d="m15 22 6-20" stroke="#d39345" stroke-width="3"/></svg></button>
    <button aria-label="Paint 3D"><svg viewBox="0 0 24 24"><path d="M13 0c2 4 8 9 8 15a9 9 0 0 1-18 0C3 10 9 5 13 0z" fill="#1da1f2"/><path d="M13 0c2 4 8 9 8 14-5 2-9-2-17 3-3-6 5-11 9-17z" fill="#a63ab8"/><path d="M13 0c1 3 3 5 5 8-3 1-5 0-9 3-1-3 2-7 4-11z" fill="#f8625a"/><path d="M13 0l3 5-5 1z" fill="#ffd23c"/></svg></button>
    <button class="run" aria-label="Opera"><svg viewBox="0 0 24 24"><ellipse cx="12" cy="12" rx="8" ry="9" fill="none" stroke="#e3111f" stroke-width="5"/></svg></button>
    <button class="run" aria-label="Discord"><svg viewBox="0 0 24 24"><path d="M2 3q0-2 2-2h16q2 0 2 2v21l-4-4H4q-2 0-2-2z" fill="#6a78c8"/><path d="M6 15c0-4 1-7 2-8h8c1 1 2 4 2 8l-3 2-1-1h-4l-1 1z" fill="#fff"/><path d="M9.500 11v2.500M14.500 11v2.500" stroke="#6a78c8" stroke-width="2"/></svg></button>
    <button class="run cur" aria-label="Blender"><svg class="orange"><use href="#blender"/></svg></button>
  </div>
  <div class="tray">
    <svg viewBox="0 0 16 16"><path d="m2 11 6-6 6 6" stroke-width="1.500"/></svg>
    <svg viewBox="0 0 16 16"><path d="M1 6h3l3-4v12l-3-4H1zM9 5.500q2 2.500 0 5M11 3.500q4 4.500 0 9M13 2q5 6 0 12"/></svg>
    <svg viewBox="0 0 16 16"><path d="M4 3h11v8H4zM9 11v3M5 14h9M1 2h4v4H1zM3 6v3"/></svg>
    <svg viewBox="0 0 16 16"><circle cx="8" cy="8" r="7" fill="#ddd" stroke="#777"/><path d="m5.500 5.500 5 5m0-5-5 5" stroke="#555" stroke-width="1.500"/></svg>
    <p class="clock">오후 4:51<br>2021-03-28</p>
    <button class="note" aria-label="알림"><svg viewBox="0 0 18 18"><path d="M0 1h18v13h-5l-4 4v-4H0z" fill="#111"/><path d="M3 5h12M3 8h12M3 11h8" stroke="#dfe"/></svg><span>6</span></button>
  </div>
</nav>

<aside class="note1">Mirror&nbsp; Modifier</aside>
<aside class="note2">Modifier&nbsp; Properties (파란&nbsp; 스페너)<br>&gt; Generate &gt;&nbsp; Mirror</aside>
</body>
</html>
```
FILE: styles.css
```css
* { box-sizing: border-box; }
body {
  margin: 0;
  min-height: 100vh;
  position: relative;
  display: flex;
  flex-direction: column;
  background: #1f1f1f;
  color: #d8d8d8;
  font: 12px/16px "DejaVu Sans Condensed", "Noto Sans", "Noto Sans CJK KR", sans-serif;
  overflow-x: hidden;
}
button, input { font: inherit; color: inherit; border: 0; padding: 0; margin: 0; background: none; min-width: 0; }
h1, h2, p, ul { margin: 0; padding: 0; font: inherit; list-style: none; }
button, label, h1, h2, li { white-space: nowrap; }
svg { flex: none; }
.sprite { position: absolute; width: 0; height: 0; }
.ic { width: 16px; height: 16px; fill: none; stroke: currentColor; }
.dn { width: 8px; height: 8px; fill: none; stroke: currentColor; }
.solid { fill: currentColor; stroke: none; }

.titlebar { height: 24px; background: #fff; color: #000; display: flex; align-items: center; gap: 5px; padding: 0 4px 0 3px; font: 12px/20px "Noto Sans", "Noto Sans CJK KR", sans-serif; }
.orange { color: #ea7600; fill: none; stroke: currentColor; }
.pupil { fill: currentColor; }
.orange .pupil { fill: #265787; }
.winbtns { margin-left: auto; display: flex; }
.winbtns button { width: 47px; height: 24px; }
.winbtns svg { width: 14px; height: 14px; fill: none; stroke: #000; }

.topbar { height: 27px; background: #232323; display: flex; align-items: center; padding: 0 9px 0 10px; }
.logo { margin-right: 10px; }
.menus { display: flex; gap: 15px; }
.tabs { display: flex; gap: 2px; margin-left: 24px; align-self: flex-end; height: 21px; flex: 1; }
.tabs button { padding: 0 8px; background: #2b2b2b; color: #8f8f8f; border-radius: 4px 4px 0 0; }
.tabs .on { background: #424242; color: #fff; }
.tabs .plus { background: none; font-size: 14px; padding: 0 4px; }
.idblock { display: flex; height: 20px; background: #2b2b2b; border: 1px solid #3a3a3a; border-radius: 4px; margin-left: 7px; }
.idblock input { width: 125px; background: #1d1d1d; padding-left: 7px; }
.idblock button { width: 20px; display: flex; align-items: center; justify-content: center; }
.idblock .pick { width: 32px; gap: 2px; }
.dim { color: #666; }
.lit { background: #545454; }
.blue { background: #4f76b6; color: #fff; }
.w { background: #2b2b2b; border-radius: 4px; display: flex; align-items: center; justify-content: center; gap: 2px; padding: 0 2px; }

.workspace { flex: 1; position: relative; display: grid; grid-template-columns: minmax(0, 1fr) 345px; gap: 3px; padding: 0 1px 1px; }
.leftcol { display: flex; flex-direction: column; gap: 2px; min-height: 0; }
.rightcol { display: flex; flex-direction: column; gap: 3px; }
.viewport { flex: 1; position: relative; background: #3b3b3b; border-radius: 6px; overflow: hidden; }
.canvas { position: absolute; inset: 0; width: 100%; height: 100%; }
.vheader { position: relative; height: 28px; background: #373737; display: flex; align-items: center; gap: 6px; padding: 1px 7px 0 8px; }
.vleft { flex: 0 0 calc(42% - 6px); display: flex; }
.vheader button, .vsub button, .ohead button, .phead button, .thead button { height: 20px; }
.vheader > .w, .vleft .w, .ohead .w, .phead .w, .thead .w { border: 1px solid #484848; }
.vleft .w, .ohead .w, .phead .w, .thead .w, .vsub > .w, .shading > .w { min-width: 32px; }
.global { width: 46px; text-align: left; padding-left: 4px; }
.join { display: flex; border-radius: 4px; overflow: hidden; }
.join .w { border-radius: 0; min-width: 34px; }
.lit, .blue { min-width: 19px; display: flex; align-items: center; justify-content: center; }
.vheader > .lit, .vright > .lit, .ohead > .lit, .vsub .blue { border-radius: 4px; }
.vsub .join .blue { border-radius: 0; }
.vsub .join .w { min-width: 20px; }
.faint { color: #888; }
.vright { margin-left: auto; display: flex; align-items: center; gap: 7px; }
.vright > .ic { margin-right: -3px; }
.xyz { display: flex; gap: 1px; }
.xyz .lit { min-width: 16px; width: 16px; }
.vheader .options { gap: 4px; padding: 0 4px 0 6px; }
.vsub { position: relative; display: flex; justify-content: space-between; padding: 3px 7px 0 8px; }
.shading { display: flex; gap: 7px; }
.shading .lit + .lit { border-left: 1px solid #444; }
.toolbar { position: absolute; left: 8px; top: 64px; width: 43px; display: grid; grid-template-rows: 72px 146px 72px 438px; gap: 5px; }
.tgroup { display: flex; flex-direction: column; gap: 1px; border-radius: 4px; overflow: hidden; background: #262626; }
.tgroup button { flex: 1; min-height: 0; background: #2f2f2f; position: relative; display: flex; align-items: center; justify-content: center; padding-right: 3px; }
.tgroup .blue { background: #4f76b6; }
.tgroup svg { width: 28px; height: 28px; fill: none; stroke: #d8d8d8; }
.tgroup .solid { fill: #e0e0e0; stroke: none; }
.more::after { content: ""; position: absolute; right: 3px; bottom: 3px; border: 3px solid; border-color: transparent #aaa #aaa transparent; }
.mint { fill: #8be0b4; stroke: none; }
.lilac { fill: #d6b8ea; }
.navside { position: absolute; right: 6px; top: 60px; display: flex; flex-direction: column; gap: 4px; align-items: flex-end; }
.gizmo { width: 92px; height: 92px; margin-bottom: -7px; }
.gizmo text { font: 11px "DejaVu Sans", sans-serif; text-anchor: middle; fill: #111; }
.navside button { width: 28px; height: 28px; margin-right: 4px; border-radius: 14px; background: #303030; color: #e6e6e6; display: flex; align-items: center; justify-content: center; }
.fold { position: absolute; right: 0; top: 68px; width: 9px; height: 18px; background: #303030; border-radius: 4px 0 0 4px; }

.timeline { height: 76px; background: #373737; border-radius: 6px; overflow: hidden; display: grid; grid-template-rows: 27px 37px 10px; }
.thead { display: flex; align-items: center; justify-content: space-between; padding: 0 7px 0 8px; }
.frames { display: flex; gap: 7px; }
.frames input { background: #545454; text-align: center; }
.frames .cur { width: 77px; height: 20px; border-radius: 4px; }
.frames label { display: flex; align-items: center; background: #545454; margin-left: 1px; height: 20px; width: 90px; padding-left: 16px; }
.frames label + label { width: 87px; }
.frames label input { width: 56px; padding-left: 12px; }
.frames label .end { padding: 0; }
.ruler { width: 100%; height: 49px; }
.ruler text { text-anchor: middle; fill: #bbb; font-size: 12px; }
.scroll { height: 10px; margin: 0 8px; border-radius: 5px; background: #696969; position: relative; }

.outliner { background: #282828; border-radius: 6px; overflow: hidden; height: 323px; }
.ohead { height: 28px; background: #383838; display: flex; align-items: center; gap: 6px; padding: 1px 8px 0 9px; }
.find { display: flex; align-items: center; width: 114px; height: 20px; background: #1d1d1d; border: 1px solid #404040; border-radius: 4px; margin-left: 19px; padding-left: 3px; }
.find input { width: 80px; }
.right { margin-left: auto; }
.tree { display: grid; grid-template-rows: repeat(14, 1fr); height: 294px; padding-top: 2px; }
.tree li { display: flex; align-items: center; padding-left: 7px; }
.tree li:nth-child(even) { background: #2c2c2c; }
.tree .l0 { padding-left: 23px; gap: 8px; }
.tree .l1 { padding-left: 24px; }
.tree .l1 .ic { margin: 0 7px 0 6px; }
.tree .l1 .end .ic { margin: 0 9px 0 8px; }
.tree i { font: 9px/16px "DejaVu Sans", sans-serif; width: 14px; text-align: center; color: #aaa; }
.tree b { width: 38px; height: 21px; background: radial-gradient(circle at 3px 10px, #ddd 2px, transparent 3px), linear-gradient(#555, #555) 24px 0 / 1px 100% no-repeat; }
.tree .mode { margin-left: -4px; margin-right: 26px; }
.tree .tri { color: #d88b4b; margin: 0 7px 0 6px; }
.tree .mesh, .tree .wr { margin-left: 24px; color: #13b98a; }
.tree .near { margin-left: 5px; }
.tree .wr { color: #5d78b8; }
.tree em { font-style: normal; color: #ffaf2e; }
.tree li.sel { background: #3b5689; }
.active { background: #ffffff38; border-radius: 3px; outline: 2px solid #ffffff38; }
.tree .end { margin-left: auto; display: flex; align-items: center; }
.tree .end .ic { color: #ddd; margin: 0 9px 0 8px; }
.tree .off { color: #777; }
.tree .off .tri, .tree .off .mesh, .tree .off .wr, .tree .off i { opacity: .6; }
.tree .off .end .ic { color: #888; }
.tree input { appearance: none; width: 12px; height: 12px; background: #ddd; border-radius: 2px; position: relative; }
.tree input::after { content: ""; position: absolute; left: 4px; top: 1px; width: 3px; height: 6px; border: solid #222; border-width: 0 2px 2px 0; transform: rotate(40deg); }

.props { flex: 1; background: #424242; border-radius: 6px; overflow: hidden; display: flex; flex-direction: column; }
.phead { display: flex; height: 27px; align-items: center; padding-left: 9px; }
.phead .find { margin-left: 76px; }
.pbody { flex: 1; display: flex; }
.ptabs { width: 30px; background: #222; padding: 10px 0 0 3px; display: flex; flex-direction: column; gap: 10px; }
.ptabs button { height: 27px; background: #2c2c2c; border-radius: 4px 0 0 4px; }
.ppane { flex: 1; padding: 11px 9px 0; }
.crumb { display: flex; align-items: center; gap: 9px; height: 16px; }
.pin { margin-left: auto; color: #999; }
.add { width: 100%; height: 20px; margin-top: 20px; display: flex; align-items: center; justify-content: space-between; padding: 0 4px 0 7px; background: #696e78; color: #fff; border-radius: 3px; }

.modmenu { position: absolute; top: 415px; right: 11px; width: 654px; height: 459px; padding: 0 0 0 5px; background: linear-gradient(#1f1f1ff4, #1f1f1ff4) 4px 4px no-repeat; color: #e0e0e0; }
.modmenu::after {
  content: ""; position: absolute; inset: 0; pointer-events: none;
  background:
    repeating-linear-gradient(90deg, #ff0 0 9px, transparent 9px 18px) 5px 0 / 640px 9px no-repeat,
    repeating-linear-gradient(90deg, #ff0 0 9px, transparent 9px 18px) 8px 100% / 639px 9px no-repeat,
    repeating-linear-gradient(#ff0 0 9px, transparent 9px 18px) 0 8px / 9px 442px no-repeat,
    repeating-linear-gradient(#ff0 0 9px, transparent 9px 18px) 100% 8px / 9px 442px no-repeat;
}
.cols { display: grid; grid-template-columns: 183px 162px 157px 143px; }
.heads { height: 37px; border-bottom: 1px solid #3a3a3a; color: #a0a0a0; padding-top: 10px; }
.heads h2 { padding-left: 7px; }
.list { display: grid; grid-template-rows: repeat(18, 1fr); height: 412px; margin-top: 5px; }
.list button { display: flex; align-items: center; gap: 7px; padding-left: 7px; margin: 2px 2px 2px 0; text-align: left; }
.list u { text-underline-offset: 2px; }
.list .hot { background: #4f76b6; color: #fff; }
.tip { position: absolute; left: 229px; top: 235px; width: 354px; height: 59px; padding: 12px 14px; background: #181818f2; border-radius: 5px; white-space: nowrap; font-size: 11px; }
.tip p { height: 22px; }
.tip span { color: #8d9cbc; margin-left: 5px; }
.tip .sub { color: #b0b0b0; }
.activate { position: absolute; right: 82px; bottom: 31px; width: 350px; white-space: nowrap; color: #a8a8a8a0; font: 22px/26px "Open Sans", "Noto Sans CJK KR", sans-serif; }
.activate .small { font-size: 17px; line-height: 22px; }

.status { height: 20px; background: #303030; display: flex; align-items: center; padding: 0 17px 0 12px; color: #aaa; }
.status span { display: flex; align-items: center; gap: 12px; width: 246px; }
.status > .mouse { margin-right: 234px; }
.mouse { width: 12px; height: 16px; fill: none; stroke: currentColor; }
.status .ver { width: auto; margin-left: auto; }

.taskbar { height: 42px; display: flex; color: #111; background: linear-gradient(90deg, #ecdcdc 0, #e0d0dc 400px, #e6d3ea 700px, #ecdcd6 1080px, #ecddd2 1370px, #cfe5c8 1430px, #cfe5c8 1550px, #ecdcd2 1590px, #ecdcd2 1650px, #cfe5c8 1710px); }
.start { width: 51px; display: flex; align-items: center; justify-content: center; }
.start svg { width: 17px; height: 17px; }
.tsearch { width: 357px; background: #fff; display: flex; align-items: center; padding-left: 12px; gap: 13px; border-top: 1px solid #ccc; }
.tsearch svg { width: 16px; height: 16px; fill: none; stroke: #111; }
.tsearch input { flex: 1; font: 17px/24px "Noto Sans CJK KR", sans-serif; }
.tsearch input::placeholder { color: #333; opacity: 1; }
.apps { display: flex; }
.apps button { width: 51px; display: flex; align-items: center; justify-content: center; }
.apps svg { width: 24px; height: 24px; }
.apps text { font: bold 12px "Liberation Sans", sans-serif; fill: #fff; text-anchor: middle; }
.apps .talk { font-size: 7px; fill: #fae100; }
.run { background: linear-gradient(#0078d7, #0078d7) 50% 100% / 42px 3px no-repeat; }
.apps .cur { background-color: #f6f2ee; background-size: 51px 3px; }
.tray { margin-left: auto; display: flex; align-items: center; gap: 9px; padding-right: 20px; }
.tray svg { width: 16px; height: 16px; fill: none; stroke: #111; }
.clock { text-align: center; font: 13px/19px "Open Sans", "Noto Sans CJK KR", sans-serif; width: 74px; }
.note { position: relative; width: 26px; height: 26px; margin-left: 5px; }
.tray .note svg { width: 19px; height: 19px; stroke: none; }
.note span { position: absolute; right: -3px; bottom: -4px; width: 17px; height: 17px; border-radius: 9px; background: #ddd; border: 1px solid #777; font: 12px/15px "Open Sans", sans-serif; text-align: center; }

.note1, .note2 { position: absolute; background: #fff; color: #000; text-align: center; font: italic 600 65px/80px Lato, "Noto Sans CJK KR", sans-serif; white-space: nowrap; }
.note1 { left: 33px; top: 46px; width: 560px; height: 186px; border: 9px solid #ff0; padding-top: 38px; }
.note2 { left: 49px; top: 829px; width: 1011px; height: 245px; border: 9px solid #00b0f0; padding-top: 30px; }
```
